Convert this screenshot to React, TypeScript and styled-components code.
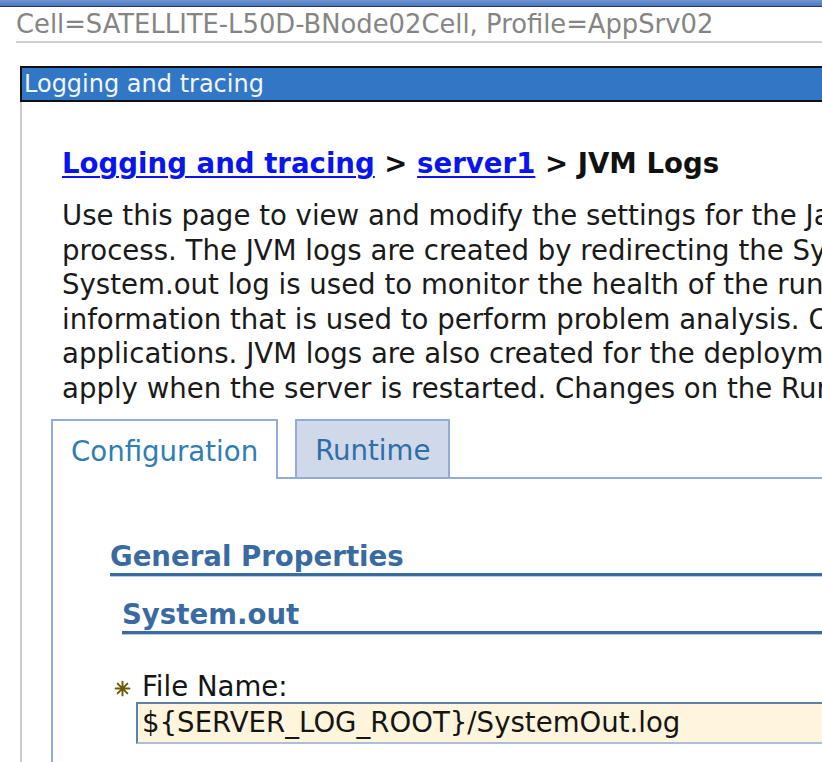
import React from "react";
import styled, { createGlobalStyle } from "styled-components";

const Global = createGlobalStyle`
  html, body { margin: 0; padding: 0; background: #fff; overflow: hidden; }
  body { font-family: "DejaVu Sans", Verdana, sans-serif; }
`;

const Page = styled.div`
  width: 822px;
  height: 762px;
  overflow: hidden;
`;

const TopStrip = styled.div`
  height: 6px;
  background: linear-gradient(#6e96d2, #4a78c0);
  border-bottom: 1px solid #2b3550;
`;

const CellLine = styled.div`
  margin-left: 16px;
  height: 34px;
  line-height: 35px;
  font-size: 25.8px;
  color: #858585;
  white-space: nowrap;
  border-bottom: 2px solid #cfcfcf;
`;

const Panel = styled.div`
  margin: 23px 0 0 20px;
`;

const PanelHeader = styled.div`
  height: 32px;
  line-height: 32px;
  background: #3277c6;
  border: 2px solid #111;
  border-right: none;
  color: #f2f6ff;
  font-size: 24px;
  padding-left: 2px;
  white-space: nowrap;
`;

const PanelBody = styled.div`
  border-left: 2px solid #cccccc;
  padding: 44px 0 0 29px;
  height: 700px;
`;

const Breadcrumb = styled.div`
  margin-left: 11px;
  font-weight: bold;
  font-size: 27.6px;
  line-height: 36px;
  white-space: nowrap;
  color: #111;
`;

const Crumb = styled.a`
  color: #0a14ee;
  text-decoration: underline;
  text-underline-offset: 3px;
  text-decoration-thickness: 2px;
`;

const Description = styled.p`
  margin: 17px 0 0 11px;
  font-size: 27.6px;
  line-height: 34.5px;
  color: #1a1a1a;
  white-space: nowrap;
`;

const TabRow = styled.div`
  display: flex;
  align-items: flex-end;
  margin-top: 13px;
  height: 60px;
`;

const Tab = styled.div<{ $active?: boolean }>`
  height: 60px;
  box-sizing: border-box;
  padding: 2px 18px 0;
  display: flex;
  align-items: center;
  flex: none;
  font-size: 27.6px;
  color: ${(p) => (p.$active ? "#2f7db4" : "#2f6ea8")};
  background: ${(p) => (p.$active ? "#fff" : "#cfd9ea")};
  border: 2px solid #93abdc;
  border-bottom: ${(p) => (p.$active ? "none" : "2px solid #93abdc")};
  white-space: nowrap;
`;

const TabGap = styled.div<{ $w?: number }>`
  width: ${(p) => p.$w ?? 16}px;
  height: 0;
  border-bottom: 2px solid #93abdc;
  flex: ${(p) => (p.$w ? "none" : "1")};
`;

const TabContent = styled.div`
  border-left: 2px solid #93abdc;
  padding: 62px 0 0 57px;
  height: 400px;
`;

const SectionTitle = styled.div<{ $indent?: number }>`
  margin-left: ${(p) => p.$indent ?? 0}px;
  font-weight: bold;
  font-size: 27.6px;
  line-height: 32px;
  color: #3a6aa2;
  border-bottom: 3px solid #3a6aa2;
  box-shadow: 0 1px 0 #b9cbe4;
  white-space: nowrap;
`;

const SubSection = styled(SectionTitle)`
  margin-top: 23px;
`;

const Field = styled.div`
  margin: 38px 0 0 4px;
`;

const LabelRow = styled.div`
  display: flex;
  align-items: center;
  gap: 11px;
  height: 30px;
  font-size: 27.6px;
  line-height: 30px;
  color: #151515;
  white-space: nowrap;
`;

const StarIcon = styled.svg`
  width: 17px;
  height: 17px;
  flex: none;
  margin-top: 2px;
`;

const Input = styled.div`
  margin-left: 22px;
  height: 42px;
  box-sizing: border-box;
  border: 2px solid #5d7fae;
  border-right: none;
  border-bottom-color: #a8bedb;
  background: #fef5dc;
  font-size: 27.6px;
  line-height: 38px;
  padding-left: 4px;
  color: #151515;
  white-space: nowrap;
  overflow: hidden;
`;

const Star = () => (
  <StarIcon viewBox="0 0 16 16">
    <g stroke="#6a5a05" strokeWidth="1.8" strokeLinecap="round">
      <line x1="8" y1="1.5" x2="8" y2="14.5" />
      <line x1="1.5" y1="8" x2="14.5" y2="8" />
      <line x1="3.4" y1="3.4" x2="12.6" y2="12.6" />
      <line x1="12.6" y1="3.4" x2="3.4" y2="12.6" />
    </g>
    <circle cx="8" cy="8" r="2.2" fill="#6a5a05" />
  </StarIcon>
);

export default function App() {
  return (
    <Page>
      <Global />
      <TopStrip />
      <CellLine>Cell=SATELLITE-L50D-BNode02Cell, Profile=AppSrv02</CellLine>
      <Panel>
        <PanelHeader>Logging and tracing</PanelHeader>
        <PanelBody>
          <Breadcrumb>
            <Crumb href="#">Logging and tracing</Crumb> &gt; <Crumb href="#">server1</Crumb> &gt; JVM Logs
          </Breadcrumb>
          <Description>
            Use this page to view and modify the settings for the Java virtual machine (JVM) System.out and System.err logs for this
            <br />
            process. The JVM logs are created by redirecting the System.out and System.err streams of the JVM to independent log files. The
            <br />
            System.out log is used to monitor the health of the running application server. The System.err log contains exception stack trace
            <br />
            information that is used to perform problem analysis. One set of JVM logs is created for each application server and all of its
            <br />
            applications. JVM logs are also created for the deployment manager and node agents. Changes on the Configuration panel will
            <br />
            apply when the server is restarted. Changes on the Runtime panel will apply immediately.
          </Description>
          <TabRow>
            <Tab $active>Configuration</Tab>
            <TabGap $w={17} />
            <Tab>Runtime</Tab>
            <TabGap />
          </TabRow>
          <TabContent>
            <SectionTitle>General Properties</SectionTitle>
            <SubSection $indent={12}>System.out</SubSection>
            <Field>
              <LabelRow>
                <Star />
                <span>File Name:</span>
              </LabelRow>
              <Input>{"${SERVER_LOG_ROOT}/SystemOut.log"}</Input>
            </Field>
          </TabContent>
        </PanelBody>
      </Panel>
    </Page>
  );
}
